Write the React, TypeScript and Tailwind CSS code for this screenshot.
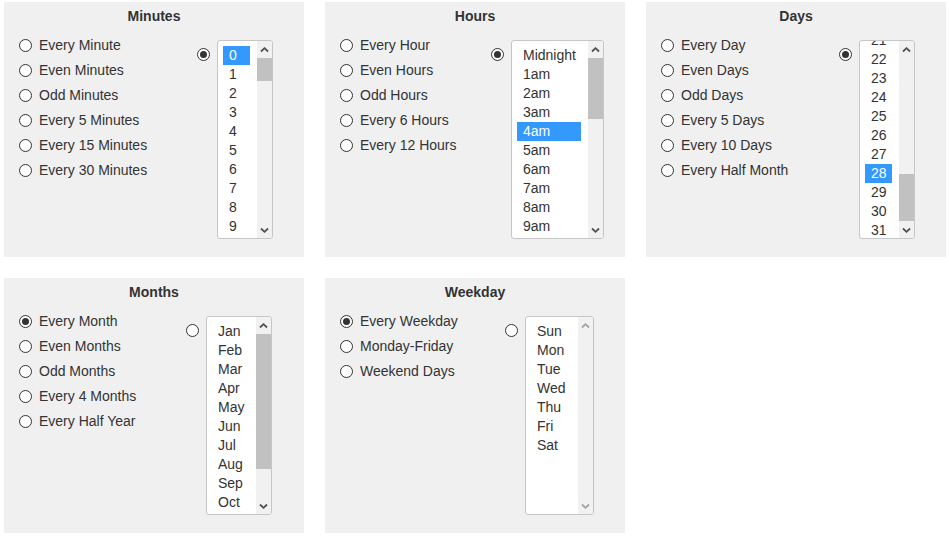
import React from "react";

type Thumb = { top: string; height: string } | null;

type Panel = {
    title: string;
    options: string[];
    checked: number; // -1 means the list radio is checked
    leftWidth: string;
    boxWidth: string;
    items: string[];
    selected: string | null;
    listOffset: string;
    thumb: Thumb;
};

const minutes = Array.from({ length: 10 }, (_, i) => String(i));
const hours = ["Midnight", "1am", "2am", "3am", "4am", "5am", "6am", "7am", "8am", "9am"];
const days = Array.from({ length: 11 }, (_, i) => String(i + 21));

const panels: Panel[] = [
    {
        title: "Minutes",
        options: ["Every Minute", "Even Minutes", "Odd Minutes", "Every 5 Minutes", "Every 15 Minutes", "Every 30 Minutes"],
        checked: -1,
        leftWidth: "w-[178px]",
        boxWidth: "w-[56px]",
        items: minutes,
        selected: "0",
        listOffset: "pt-[5px]",
        thumb: { top: "mt-0", height: "h-[23px]" },
    },
    {
        title: "Hours",
        options: ["Every Hour", "Even Hours", "Odd Hours", "Every 6 Hours", "Every 12 Hours"],
        checked: -1,
        leftWidth: "w-[151px]",
        boxWidth: "w-[93px]",
        items: hours,
        selected: "4am",
        listOffset: "pt-[5px]",
        thumb: { top: "mt-0", height: "h-[61px]" },
    },
    {
        title: "Days",
        options: ["Every Day", "Even Days", "Odd Days", "Every 5 Days", "Every 10 Days", "Every Half Month"],
        checked: -1,
        leftWidth: "w-[178px]",
        boxWidth: "w-[56px]",
        items: days,
        selected: "28",
        listOffset: "-mt-[10px]",
        thumb: { top: "mt-[116px]", height: "h-[47px]" },
    },
    {
        title: "Months",
        options: ["Every Month", "Even Months", "Odd Months", "Every 4 Months", "Every Half Year"],
        checked: 0,
        leftWidth: "w-[167px]",
        boxWidth: "w-[66px]",
        items: ["Jan", "Feb", "Mar", "Apr", "May", "Jun", "Jul", "Aug", "Sep", "Oct"],
        selected: null,
        listOffset: "pt-[5px]",
        thumb: { top: "mt-0", height: "h-[135px]" },
    },
    {
        title: "Weekday",
        options: ["Every Weekday", "Monday-Friday", "Weekend Days"],
        checked: 0,
        leftWidth: "w-[165px]",
        boxWidth: "w-[69px]",
        items: ["Sun", "Mon", "Tue", "Wed", "Thu", "Fri", "Sat"],
        selected: null,
        listOffset: "pt-[5px]",
        thumb: null,
    },
];

function Radio({ checked }: { checked?: boolean }) {
    return (
        <span className="w-[13px] h-[13px] rounded-full border border-[#333] bg-white flex items-center justify-center shrink-0">
            {checked && <span className="w-[7px] h-[7px] rounded-full bg-[#333]" />}
        </span>
    );
}

function Arrow({ down, disabled }: { down?: boolean; disabled?: boolean }) {
    return (
        <svg width="9" height="6" viewBox="0 0 9 6">
            <path
                d={down ? "M1 1.5 L4.5 4.8 L8 1.5" : "M1 4.5 L4.5 1.2 L8 4.5"}
                fill="none"
                stroke={disabled ? "#a3a3a3" : "#505050"}
                strokeWidth="1.8"
            />
        </svg>
    );
}

function ListBox({ p }: { p: Panel }) {
    const disabled = p.thumb === null;
    return (
        <div className={`${p.boxWidth} h-[199px] flex rounded-[3px] border border-[#c6c6c6] bg-white overflow-hidden`}>
            <div className="flex-1 min-w-0 overflow-hidden pl-[5px] pr-[7px]">
                <div className={p.listOffset}>
                    {p.items.map((it) => (
                        <div
                            key={it}
                            className={`h-[19px] leading-[19px] pl-[6px] whitespace-nowrap ${
                                it === p.selected ? "bg-[#3399ff] text-white" : "text-[#333]"
                            }`}
                        >
                            {it}
                        </div>
                    ))}
                </div>
            </div>
            <div className="w-[15px] shrink-0 bg-[#f1f1f1] flex flex-col">
                <div className="h-[17px] flex items-center justify-center">
                    <Arrow disabled={disabled} />
                </div>
                <div className="flex-1">
                    {p.thumb && <div className={`${p.thumb.top} ${p.thumb.height} bg-[#c1c1c1]`} />}
                </div>
                <div className="h-[17px] flex items-center justify-center">
                    <Arrow down disabled={disabled} />
                </div>
            </div>
        </div>
    );
}

function CronPanel({ p }: { p: Panel }) {
    return (
        <div className="w-[300px] h-[255px] bg-[#f0f0f0]">
            <div className="h-[30px] pt-[5px] leading-[18px] text-center font-bold text-[#333]">{p.title}</div>
            <div className="flex pl-[15px]">
                <div className={`${p.leftWidth} shrink-0 pt-[1px]`}>
                    {p.options.map((o, i) => (
                        <label key={o} className="h-[25px] flex items-center gap-[7px] leading-[25px] text-[#333] whitespace-nowrap">
                            <Radio checked={p.checked === i} />
                            <span>{o}</span>
                        </label>
                    ))}
                </div>
                <div className="flex items-start">
                    <div className="mt-[16px]">
                        <Radio checked={p.checked === -1} />
                    </div>
                    <div className="ml-[7px] mt-[8px]">
                        <ListBox p={p} />
                    </div>
                </div>
            </div>
        </div>
    );
}

export default function App() {
    return (
        <div
            className="w-[949px] h-[536px] bg-white text-[14px] pl-[4px] pt-[2px] flex flex-wrap content-start gap-[21px]"
            style={{ fontFamily: '"Liberation Sans", Arial, sans-serif' }}
        >
            {panels.map((p) => (
                <CronPanel key={p.title} p={p} />
            ))}
        </div>
    );
}
